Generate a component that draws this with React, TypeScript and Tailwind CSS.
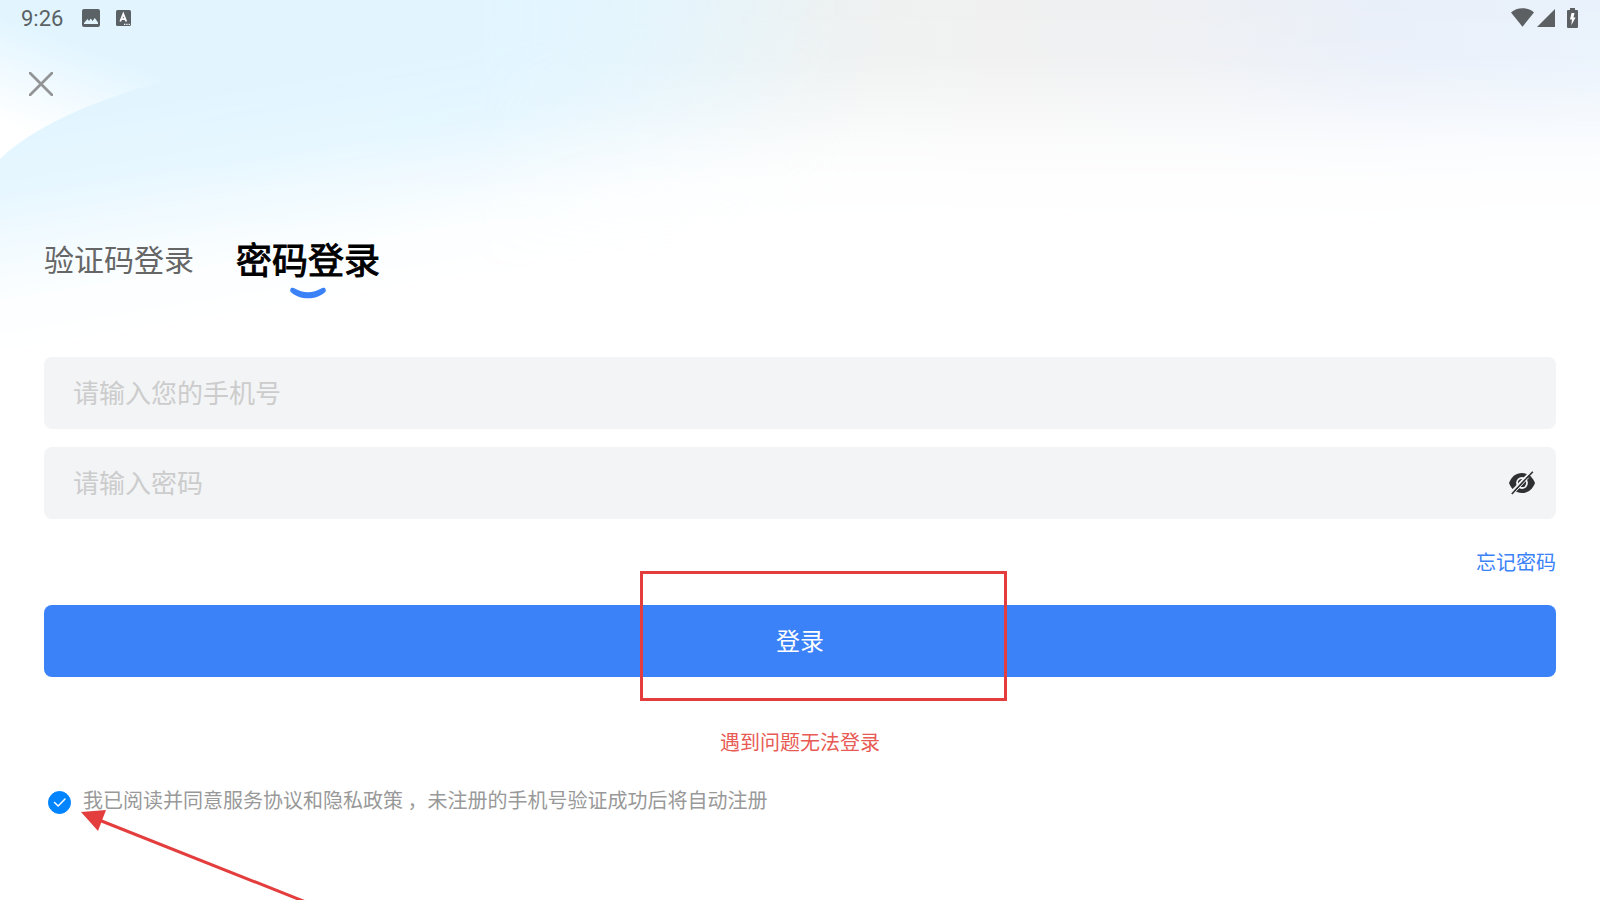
import { useState } from 'react';

const tabs = [
  { id: 'code', label: '验证码登录' },
  { id: 'password', label: '密码登录' },
];

function Backdrop() {
  return (
    <svg
      className="absolute inset-x-0 top-0 w-full h-[360px] pointer-events-none"
      viewBox="0 0 1600 360"
      preserveAspectRatio="none"
      aria-hidden="true"
    >
      <defs>
        <linearGradient id="sky" gradientUnits="userSpaceOnUse" x1="0" y1="0" x2="1600" y2="0">
          <stop offset="0.25" stopColor="#e4f6fe" />
          <stop offset="0.4" stopColor="#e8f4f8" />
          <stop offset="0.5" stopColor="#eef2f2" />
          <stop offset="0.62" stopColor="#f0f0f0" />
          <stop offset="0.74" stopColor="#eef0f3" />
          <stop offset="0.86" stopColor="#e9eff9" />
          <stop offset="1" stopColor="#e9f2fc" />
        </linearGradient>
        <linearGradient id="skyFade" gradientUnits="userSpaceOnUse" x1="0" y1="0" x2="0" y2="240">
          <stop offset="0" stopColor="#fff" />
          <stop offset="0.25" stopColor="#fff" stopOpacity="0.9" />
          <stop offset="0.42" stopColor="#fff" stopOpacity="0.6" />
          <stop offset="0.6" stopColor="#fff" stopOpacity="0.24" />
          <stop offset="0.76" stopColor="#fff" stopOpacity="0.06" />
          <stop offset="1" stopColor="#fff" stopOpacity="0" />
        </linearGradient>
        <linearGradient id="blue" gradientUnits="userSpaceOnUse" x1="0" y1="0" x2="1600" y2="0">
          <stop offset="0" stopColor="#e2f5ff" />
          <stop offset="0.3" stopColor="#e2f5ff" />
          <stop offset="0.54" stopColor="#e2f5ff" stopOpacity="0" />
        </linearGradient>
        <linearGradient id="blueFade" gradientUnits="userSpaceOnUse" x1="0" y1="0" x2="58" y2="350">
          <stop offset="0.35" stopColor="#fff" />
          <stop offset="0.54" stopColor="#fff" stopOpacity="0.82" />
          <stop offset="0.7" stopColor="#fff" stopOpacity="0.42" />
          <stop offset="0.82" stopColor="#fff" stopOpacity="0.13" />
          <stop offset="1" stopColor="#fff" stopOpacity="0" />
        </linearGradient>
        <linearGradient id="corner" gradientUnits="userSpaceOnUse" x1="60" y1="38" x2="26" y2="130">
          <stop offset="0" stopColor="#fff" stopOpacity="0" />
          <stop offset="1" stopColor="#fff" />
        </linearGradient>
        <mask id="skyMask" maskUnits="userSpaceOnUse" x="0" y="0" width="1600" height="360">
          <rect width="1600" height="360" fill="url(#skyFade)" />
        </mask>
        <mask id="blueMask" maskUnits="userSpaceOnUse" x="0" y="0" width="1600" height="360">
          <rect width="1600" height="360" fill="url(#blueFade)" />
        </mask>
      </defs>
      <rect width="1600" height="360" fill="url(#sky)" mask="url(#skyMask)" />
      <rect width="1600" height="360" fill="url(#blue)" mask="url(#blueMask)" />
      <path d="M0 159C42 119 128 84 250 62V0H0Z" fill="url(#corner)" />
    </svg>
  );
}

function StatusBar() {
  return (
    <div className="flex items-center justify-between h-9 pl-[21px] pr-[22px] text-[#5b6265]">
      <div className="flex items-center">
        <span className="w-[61px] pt-px font-[Roboto,sans-serif] text-[22px] leading-9">9:26</span>
        <svg className="w-[18px] h-[18px]" viewBox="0 0 18 18" aria-hidden="true">
          <path
            fill="currentColor"
            fillRule="evenodd"
            d="M2 0h14a2 2 0 0 1 2 2v14a2 2 0 0 1-2 2H2a2 2 0 0 1-2-2V2a2 2 0 0 1 2-2Zm0 15h14v-1.500l-3.200-4.500-2.300 3-1.700-2.500L7 12 5.500 10 2 14Z"
          />
        </svg>
        <svg className="ml-4 w-[15px] h-4" viewBox="0 0 15 16" aria-hidden="true">
          <rect width="15" height="16" rx="1.500" fill="currentColor" />
          <path d="M4.300 11.500 7.300 4 10.300 11.500M5.400 9.200h3.800" fill="none" stroke="#fff" strokeWidth="1.800" />
          <path d="M8 14.300h1.300M10.300 14.300h1.300M12.600 14.300h1.300" stroke="#fff" strokeWidth="1.200" />
        </svg>
      </div>
      <div className="flex items-center pb-px text-[#5d6063]">
        <svg className="w-[23px] h-[19px]" viewBox="0 0 23 19" aria-hidden="true">
          <path fill="currentColor" d="M0 4.500C3 1.800 7 .3 11.500.3S20 1.800 23 4.500L11.500 18.700Z" />
        </svg>
        <svg className="ml-[3px] w-[18px] h-[18px]" viewBox="0 0 18 18" aria-hidden="true">
          <path fill="currentColor" d="M18 0v18H0Z" />
        </svg>
        <svg className="ml-3 w-[11px] h-5" viewBox="0 0 11 20" aria-hidden="true">
          <path fill="currentColor" d="M3 0h5v2h2a1 1 0 0 1 1 1v16a1 1 0 0 1-1 1H1a1 1 0 0 1-1-1V3a1 1 0 0 1 1-1h2Z" />
          <path fill="#fff" d="M7.500 5H4.500L3 11.500h2L4.300 17.200 8.600 9.500H6.500Z" />
        </svg>
      </div>
    </div>
  );
}

function EyeOffIcon() {
  return (
    <svg className="w-[26px] h-6" viewBox="0 0 26 24" aria-hidden="true">
      <path d="M0 12C2.500 5.500 7 2 13 2s10.500 3.500 13 10c-2.500 6.500-7 10-13 10S2.500 18.500 0 12Z" fill="#2f3032" />
      <circle cx="13" cy="12" r="5" fill="none" stroke="#f3f4f6" strokeWidth="1.800" />
      <path d="M1.800 21.500 22.200 0" stroke="#f3f4f6" strokeWidth="2" />
      <path d="M2.800 23 23.800.8" stroke="#2f3032" strokeWidth="1.600" />
      <path d="M6.500 20.700 19.700 6.700" stroke="#f3f4f6" strokeWidth="1" />
    </svg>
  );
}

export default function App() {
  const [tab, setTab] = useState('password');
  const [phone, setPhone] = useState('');
  const [password, setPassword] = useState('');
  const [visible, setVisible] = useState(false);
  const [agreed, setAgreed] = useState(true);

  return (
    <div className="relative min-h-screen overflow-hidden bg-white font-['Noto_Sans_CJK_SC',sans-serif]">
      <Backdrop />

      <div className="relative">
        <StatusBar />

        <header className="px-[29px] pt-9">
          <button type="button" aria-label="关闭" className="block">
            <svg className="w-6 h-6" viewBox="0 0 24 24" fill="none" aria-hidden="true">
              <path d="M1 1l22 22M23 1L1 23" stroke="#929495" strokeWidth="2.800" strokeLinecap="round" />
            </svg>
          </button>
        </header>

        <main className="px-11 pt-[136px]">
          {/* Tabs */}
          <div role="tablist" className="flex items-start gap-[42px] h-[68px]">
            {tabs.map((t) => (
              <button
                key={t.id}
                type="button"
                role="tab"
                aria-selected={tab === t.id}
                onClick={() => setTab(t.id)}
                className={
                  tab === t.id
                    ? 'flex flex-col items-center gap-[3px] text-4xl leading-[52px] text-black [-webkit-text-stroke:1px_#000]'
                    : 'text-3xl leading-[52px] text-[#666]'
                }
              >
                {t.label}
                {tab === t.id && (
                  <svg className="w-9 h-3" viewBox="0 0 36 12" fill="none" aria-hidden="true">
                    <path
                      d="M1.800.8C.3 1.300-.4 3.500.8 5c8.500 8.400 25.900 8.400 34.400 0C36.400 3.500 35.700 1.300 34.200.8 33 .4 32.200.8 31.200 1.500c-8 4.900-18.400 4.900-26.400 0C3.800.8 3 .4 1.800.8Z"
                      fill="#3b82f9"
                    />
                  </svg>
                )}
              </button>
            ))}
          </div>

          <form className="pt-[57px]" onSubmit={(e) => e.preventDefault()}>
            <div className="flex flex-col gap-[18px]">
              <input
                type="tel"
                aria-label="手机号"
                value={phone}
                onChange={(e) => setPhone(e.target.value)}
                placeholder="请输入您的手机号"
                className="w-full h-[72px] px-[29px] pb-1 rounded-lg bg-[#f3f4f6] text-[26px] text-[#333] placeholder:text-[#ccc] outline-none"
              />
              <div className="flex items-center h-[72px] pl-[29px] pr-[21px] rounded-lg bg-[#f3f4f6]">
                <input
                  type={visible ? 'text' : 'password'}
                  aria-label="密码"
                  value={password}
                  onChange={(e) => setPassword(e.target.value)}
                  placeholder="请输入密码"
                  className="flex-1 min-w-0 h-full pb-1 text-[26px] text-[#333] placeholder:text-[#ccc] outline-none"
                />
                <button type="button" aria-label="显示密码" onClick={() => setVisible(!visible)}>
                  <EyeOffIcon />
                </button>
              </div>
            </div>

            <div className="flex justify-end pt-7 pb-7">
              <a href="#" className="text-xl leading-[30px] text-[#3b82f9]">忘记密码</a>
            </div>

            <div className="relative">
              <button type="submit" className="w-full h-[72px] pb-0.5 rounded-lg bg-[#3b82f9] text-2xl text-white">
                登录
              </button>
              {/* Highlight frame */}
              <div className="absolute left-1/2 -top-[34px] -ml-40 w-[367px] h-[130px] border-3 border-[#e43d3d] pointer-events-none" />
            </div>

            <div className="flex justify-center pt-[50px]">
              <a href="#" className="text-xl leading-[30px] text-[#e85a54]">遇到问题无法登录</a>
            </div>

            <div className="relative pt-7">
              <label className="flex items-center gap-3 pl-1 text-xl leading-[30px] text-[#999]">
                <span className="relative block mt-1 w-[23px] h-[23px]">
                  <input
                    type="checkbox"
                    checked={agreed}
                    onChange={(e) => setAgreed(e.target.checked)}
                    className="block appearance-none w-full h-full rounded-full border border-[#bbb] checked:border-[#0084ff] checked:bg-[#0084ff]"
                  />
                  {agreed && (
                    <svg className="absolute inset-0 w-full h-full pointer-events-none" viewBox="0 0 23 23" fill="none" aria-hidden="true">
                      <path d="M6.500 11.500 10.200 15 17 8" stroke="#fff" strokeWidth="1.500" strokeLinecap="round" strokeLinejoin="round" />
                    </svg>
                  )}
                </span>
                我已阅读并同意服务协议和隐私政策 ，未注册的手机号验证成功后将自动注册
              </label>
              {/* Pointer arrow */}
              <svg
                className="absolute left-[37px] top-[53px] w-[260px] h-[104px] pointer-events-none"
                viewBox="0 0 260 104"
                aria-hidden="true"
              >
                <path d="M18 10 260 106" stroke="#e43d3d" strokeWidth="3" />
                <path d="M0 2 25 0 17 21Z" fill="#e43d3d" />
              </svg>
            </div>
          </form>
        </main>
      </div>
    </div>
  );
}
